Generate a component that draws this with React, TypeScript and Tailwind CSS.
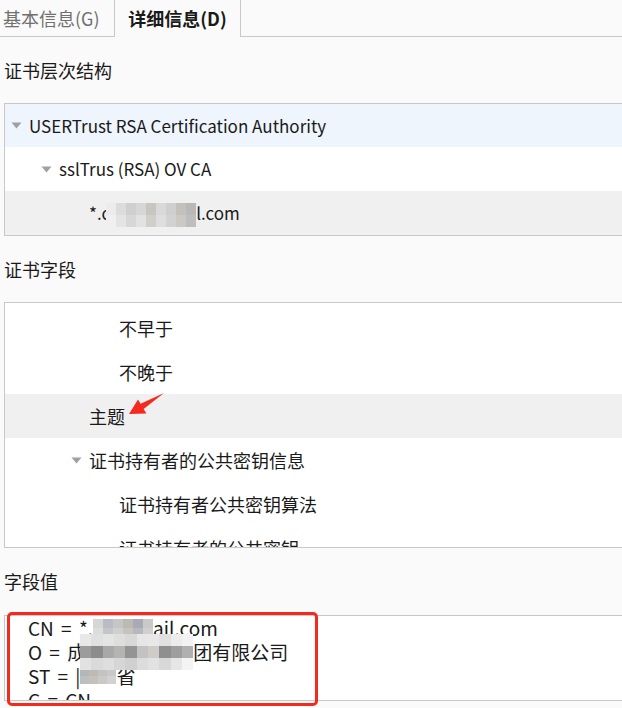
import React from "react";

const font = { fontFamily: '"Noto Sans CJK SC", "Noto Sans", sans-serif' };

const Caret = () => (
  <svg width="11" height="7" viewBox="0 0 11 7" className="shrink-0">
    <path d="M0.5 0.5 L10.5 0.5 L5.5 6.5 Z" fill="#a0a0a0" />
  </svg>
);

// pixelated redaction block
const Mosaic = ({ rows, w = 10, h = 10 }: { rows: string[][]; w?: number; h?: number }) => (
  <span className="relative inline-flex flex-col align-middle shrink-0">
    {rows.map((r, i) => (
      <span key={i} className="flex">
        {r.map((c, j) => (
          <span key={j} style={{ width: w, height: h, background: c }} />
        ))}
      </span>
    ))}
  </span>
);

const TreeRow = ({
  indent,
  caret,
  bg,
  h = "h-[44px]",
  children,
}: {
  indent: number;
  caret?: boolean;
  bg?: string;
  h?: string;
  children: React.ReactNode;
}) => (
  <div className={`${h} flex items-center ${bg ?? ""}`}>
    <div style={{ width: indent }} className="shrink-0 flex justify-end pr-[7px]">
      {caret && <Caret />}
    </div>
    <div className="whitespace-nowrap flex items-center">{children}</div>
  </div>
);

export default function App() {
  return (
    <div
      className="w-[622px] h-[708px] overflow-hidden bg-[#fafafa] text-[#1a1a1a] text-[18px] flex flex-col"
      style={font}
    >
      {/* tabs */}
      <div className="flex h-[37px] shrink-0">
        <div className="w-[114px] border-b border-[#c8c8c8] flex items-center pl-[3px] text-[#707070]">
          基本信息(G)
        </div>
        <div className="w-[127px] border-x border-[#c8c8c8] flex items-center justify-center font-bold">
          详细信息(D)
        </div>
        <div className="flex-1 border-b border-[#c8c8c8]" />
      </div>

      <div className="h-[66px] shrink-0 flex items-center pl-[4px]">证书层次结构</div>

      <div className="ml-[4px] w-[700px] shrink-0 border border-[#c8c8c8] bg-white text-[17px]">
        <TreeRow indent={24} caret bg="bg-[#eef5fd]" h="h-[43px]">
          USERTrust RSA Certification Authority
        </TreeRow>
        <TreeRow indent={54} caret>
          sslTrus (RSA) OV CA
        </TreeRow>
        <TreeRow indent={84} bg="bg-[#f0f0f0]">
          *.c
          <span className="-ml-[4px]">
            <Mosaic
              w={10}
              h={12}
              rows={[
                ["#ececec", "#dcdcdc", "#cfcfcf", "#d6d6d6", "#c9c6c2", "#d9d9d9", "#cfcfcf", "#c4c1bd", "#b9b9b9"],
                ["#f0f0f0", "#e4e4e4", "#d7d7d7", "#e2e2e2", "#d2cec9", "#dedede", "#d2d2d2", "#ccc8c3", "#bebebe"],
              ]}
            />
          </span>
          l.com
        </TreeRow>
      </div>

      <div className="h-[66px] shrink-0 flex items-center pl-[4px]">证书字段</div>

      <div className="relative ml-[4px] w-[700px] h-[246px] shrink-0 border border-[#c8c8c8] bg-white overflow-hidden pt-[3px]">
        <TreeRow indent={114}>不早于</TreeRow>
        <TreeRow indent={114}>不晚于</TreeRow>
        <TreeRow indent={84} bg="bg-[#f0f0f0]">
          主题
        </TreeRow>
        <TreeRow indent={84} caret>
          证书持有者的公共密钥信息
        </TreeRow>
        <TreeRow indent={114}>证书持有者公共密钥算法</TreeRow>
        <TreeRow indent={114}>证书持有者的公共密钥</TreeRow>

        {/* annotation arrow */}
        <svg
          className="absolute left-[120px] top-[85px]"
          width="44"
          height="32"
          viewBox="0 0 44 32"
        >
          <path
            d="M4 26 L13 11.5 L15.6 15.8 L39 5 L18.6 21 L21.4 25.4 Z"
            fill="#f52a1e"
          />
        </svg>
      </div>

      <div className="h-[67px] shrink-0 flex items-center pl-[4px]">字段值</div>

      <div className="relative ml-[4px] w-[700px] shrink-0">
        <div className="h-[86px] border border-[#c8c8c8] bg-white overflow-hidden pl-[23px] text-[19px] leading-[24px] whitespace-nowrap [word-spacing:3px]">
          <div className="h-[24px] flex items-center whitespace-pre">
            {"CN = *."}
            <Mosaic
              w={10}
              h={9}
              rows={[
                ["#d6d6d6", "#b9bcc2", "#c6c6c6", "#bdbab4", "#a8abb4", "#c9c9c9"],
                ["#dcdcdc", "#c3c5ca", "#cfcfcf", "#c6c3be", "#b5b8bf", "#d0d0d0"],
              ]}
            />
            ail.com
          </div>
          <div className="h-[24px] flex items-center relative z-10 whitespace-pre">
            {"O = 成"}
            <span className="-ml-[6px] -my-[8px] flex">
              <Mosaic
                w={11.3}
                h={12}
                rows={[
                  ["#e8e8e8", "#e0e0e0", "#e4e4e4", "#dedede", "#d8d8d8", "#e6e6e6", "#e8e8e8", "#e0e0e0", "#ececec", "#f2f2f2"],
                  ["#9c9c9c", "#8c8c8c", "#a8a8a8", "#b4b4b2", "#949494", "#c2c2c2", "#cfccc8", "#8f8f8f", "#9f9e9c", "#b0b0b0"],
                  ["#e2e2e2", "#dadada", "#dedede", "#d6d6d6", "#d0d0d0", "#dcdcdc", "#e2e2e2", "#d8d8d8", "#e6e6e6", "#f4f4f4"],
                ]}
              />
            </span>
            团有限公司
          </div>
          <div className="h-[24px] flex items-center whitespace-pre">
            {"ST = |"}
            <Mosaic
              w={9}
              h={8}
              rows={[["#b4b6b8", "#bdbab6", "#c5c3c1", "#c9c9c9"], ["#bcbec0", "#c4c1bd", "#cbc9c7", "#d2d2d2"]]}
            />
            省
          </div>
          <div className="h-[24px] flex items-center">C = CN</div>
        </div>
        {/* red highlight */}
        <div className="absolute left-[3px] -top-[3px] w-[311px] h-[94px] border-[3px] border-[#f52a1e] rounded-[5px]" />
      </div>
    </div>
  );
}
